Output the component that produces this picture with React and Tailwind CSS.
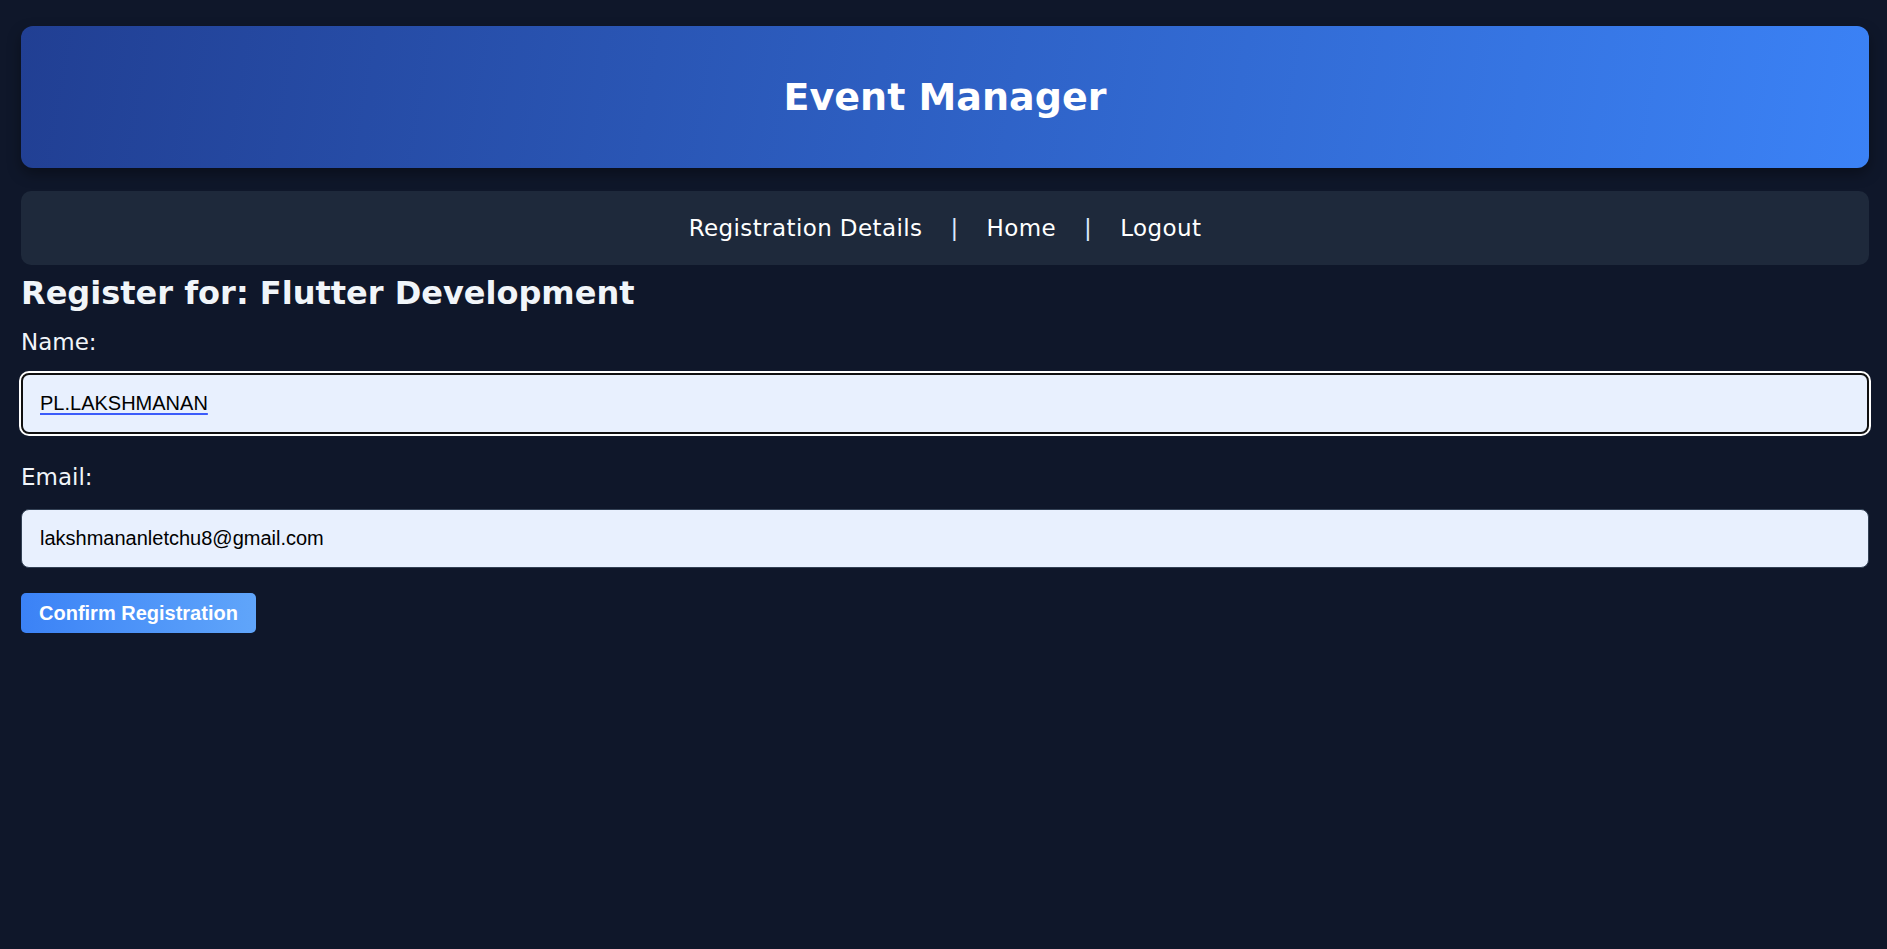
import React, { useState } from 'react';

const App = () => {
  const [name, setName] = useState('PL.LAKSHMANAN');
  const [email, setEmail] = useState('lakshmananletchu8@gmail.com');

  return (
    <div className="min-h-screen bg-[#0f172a] pl-[21px] pr-[18px] pt-[26px] font-['DejaVu_Sans',sans-serif] text-white">
      <header className="h-[142px] rounded-[12px] bg-linear-[100deg] from-[#213f93] to-[#3b82f6] shadow-[0_6px_14px_rgba(0,0,0,0.35)] flex items-center justify-center">
        <h1 className="text-[38px] font-bold">Event Manager</h1>
      </header>

      <nav className="mt-[23px] h-[74px] rounded-[10px] bg-[#1e293b] flex items-center justify-center text-[23px] tracking-[0.4px]">
        <a className="cursor-pointer">Registration Details</a>
        <span className="mx-[28px] text-[#dbeafe]">|</span>
        <a className="cursor-pointer">Home</a>
        <span className="mx-[28px] text-[#dbeafe]">|</span>
        <a className="cursor-pointer">Logout</a>
      </nav>

      <h2 className="mt-[8px] text-[32px] font-bold leading-[40px] text-[#f1f5f9]">Register for: Flutter Development</h2>

      <form className="flex flex-col" onSubmit={e => e.preventDefault()}>
        <label className="mt-[14px] text-[23px] leading-[30px] text-[#f1f5f9]">Name:</label>
        <input
          value={name}
          onChange={e => setName(e.target.value)}
          className="mt-[16px] h-[61px] rounded-[8px] border-2 border-[#101010] bg-[#e8f0fe] px-[17px] text-[20px] text-black font-['Liberation_Sans',Arial,sans-serif] underline [text-decoration-color:#3b5bfa] [text-decoration-thickness:2px] underline-offset-[3px] shadow-[0_0_0_2px_#ffffff] outline-none"
        />
        <label className="mt-[28px] text-[23px] leading-[30px] text-[#f1f5f9]">Email:</label>
        <input
          value={email}
          onChange={e => setEmail(e.target.value)}
          className="mt-[17px] h-[59px] rounded-[8px] border border-[#334155] bg-[#e8f0fe] px-[18px] text-[20px] text-black font-['Liberation_Sans',Arial,sans-serif] outline-none"
        />
        <div className="mt-[25px]">
          <button
            type="submit"
            className="h-[40px] rounded-[5px] bg-linear-to-r from-[#3b82f6] to-[#60a5fa] px-[18px] text-[20px] font-bold text-white font-['Liberation_Sans',Arial,sans-serif]"
          >
            Confirm Registration
          </button>
        </div>
      </form>
    </div>
  );
};

export default App;
